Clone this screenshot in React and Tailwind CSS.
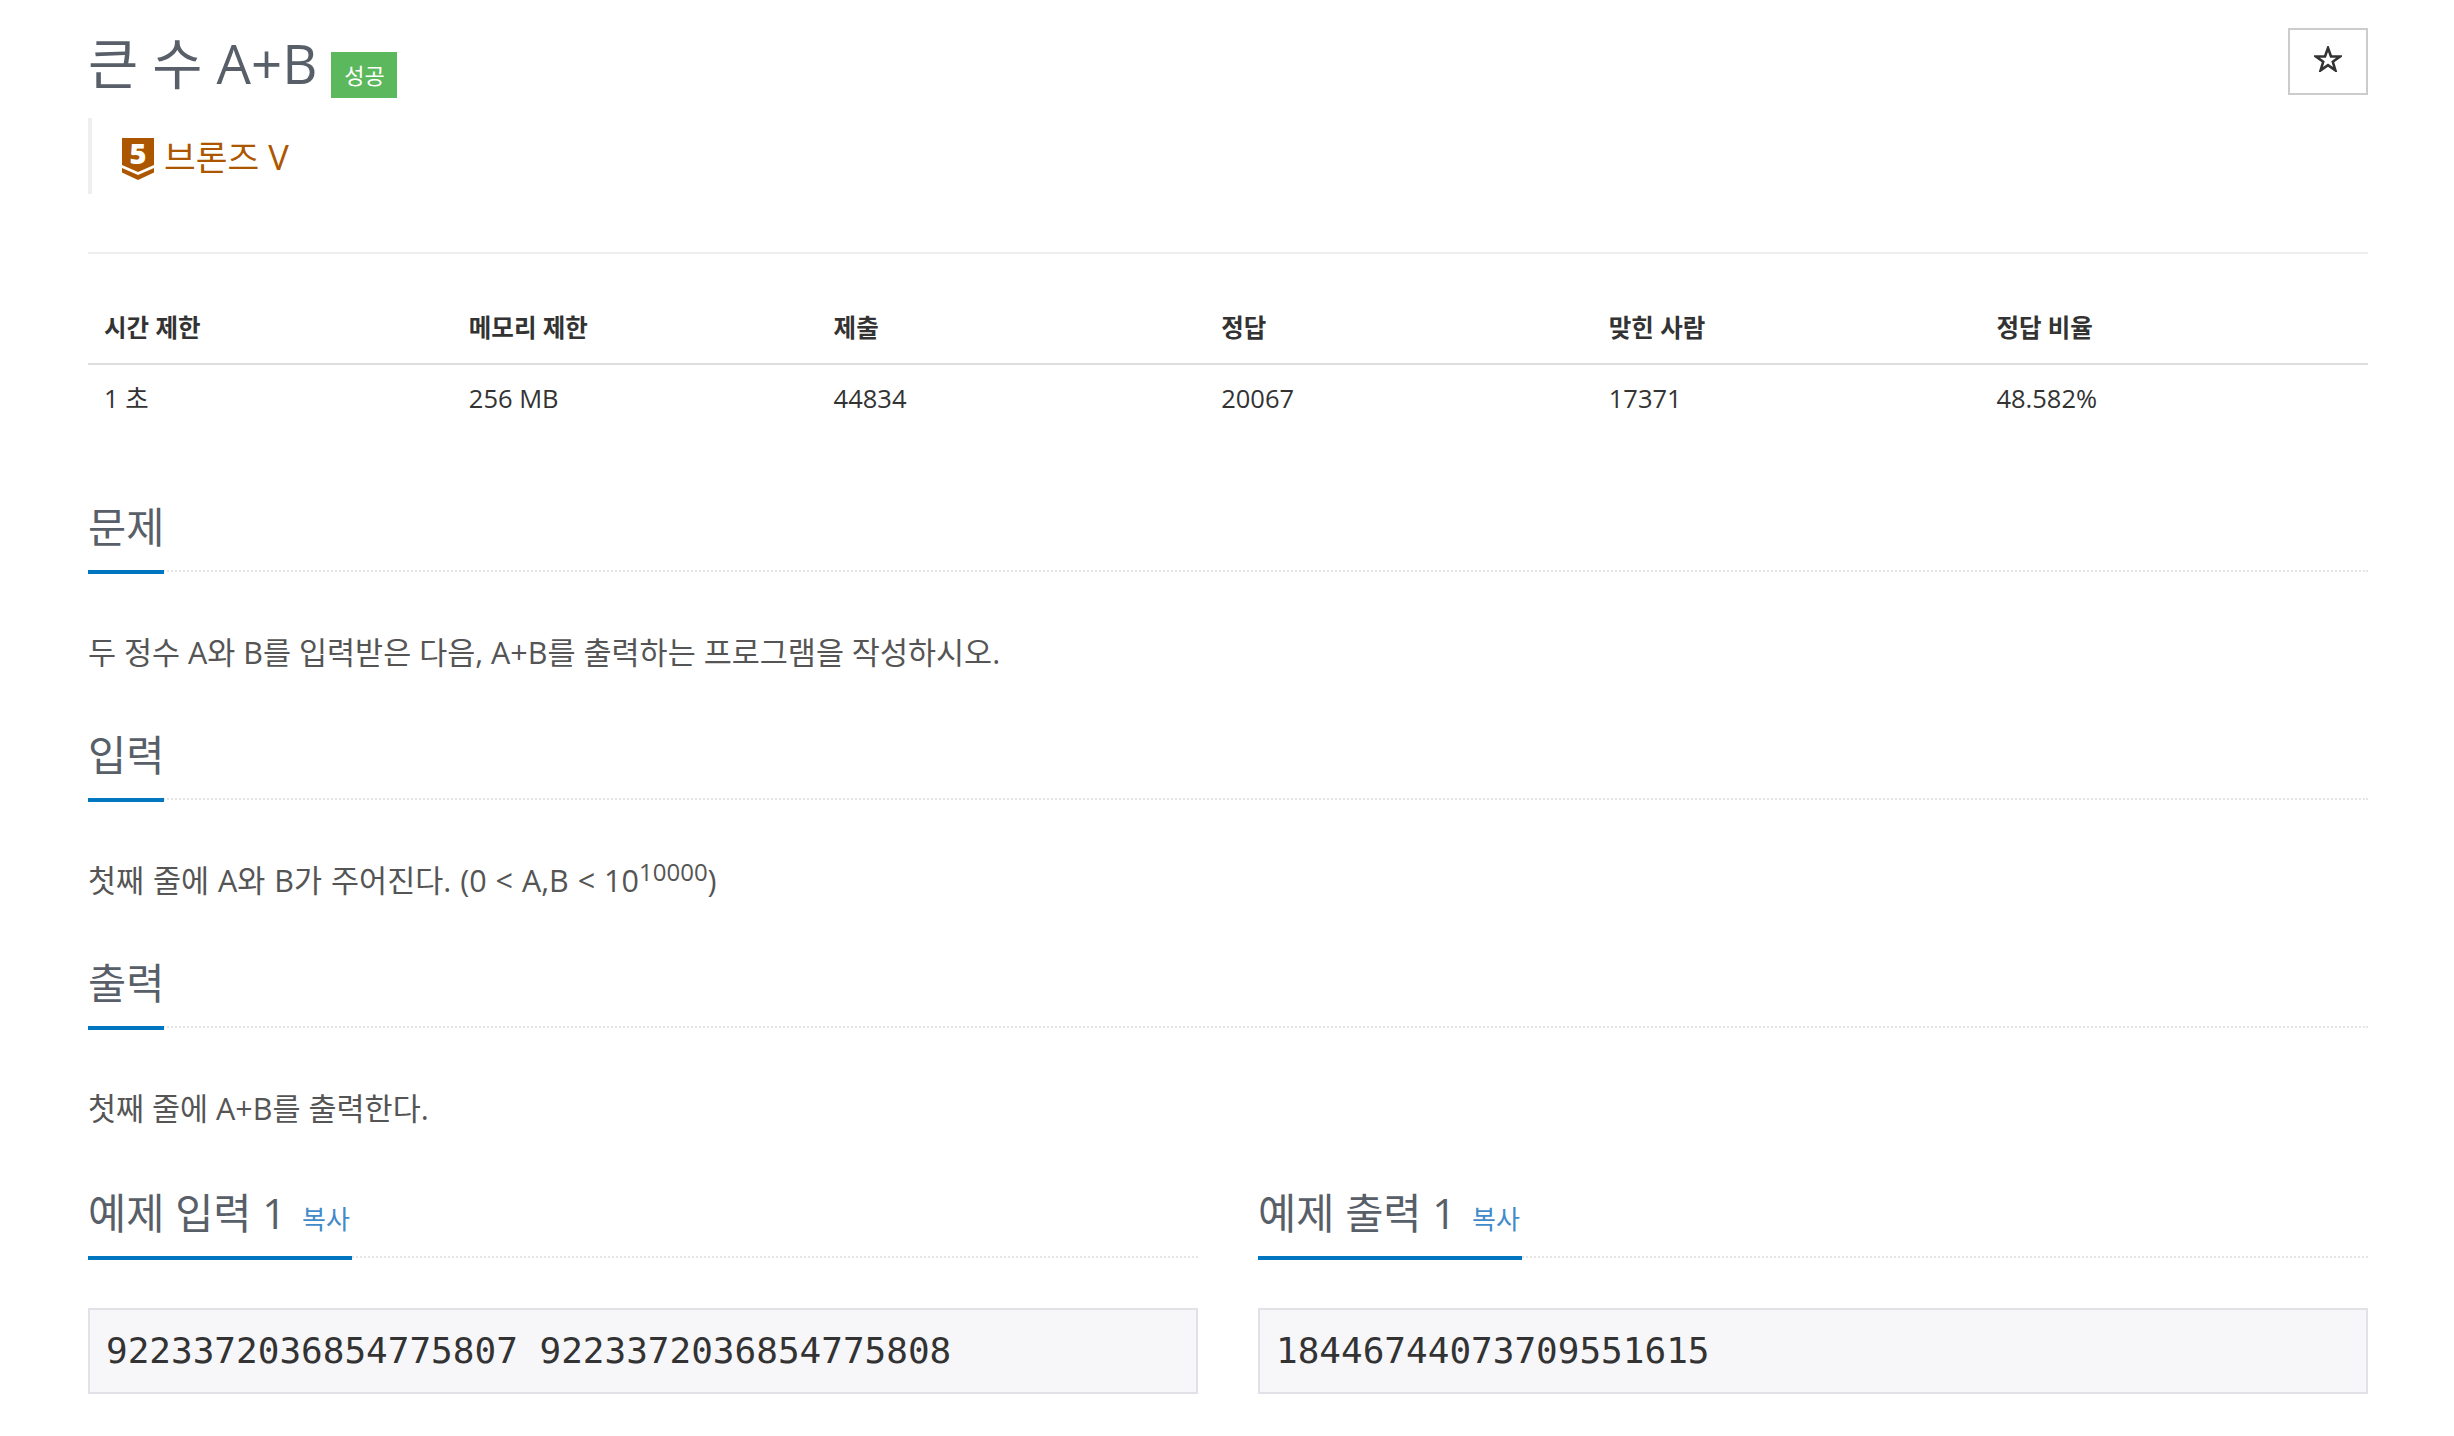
import React from 'react';

const STATS = [
  { label: '시간 제한', value: '1 초', width: 'w-[16%]' },
  { label: '메모리 제한', value: '256 MB', width: 'w-[16%]' },
  { label: '제출', value: '44834', width: 'w-[17%]' },
  { label: '정답', value: '20067', width: 'w-[17%]' },
  { label: '맞힌 사람', value: '17371', width: 'w-[17%]' },
  { label: '정답 비율', value: '48.582%', width: 'w-[17%]' },
];

function TierIcon() {
  return (
    <svg viewBox="0 0 32 42" className="w-[32px] h-[42px] shrink-0 overflow-visible">
      <path d="M0 0H32V27L16 34L0 27Z" fill="#ad5600" />
      <path d="M0 30L16 37L32 30V34.5L16 42L0 34.5Z" fill="#ad5600" />
      <text x="16" y="26" textAnchor="middle" fontSize="29" fontWeight="800" fill="#ffffff" fontFamily="'Open Sans', sans-serif">5</text>
    </svg>
  );
}

function StarIcon() {
  return (
    <svg viewBox="0 0 28 26" className="w-[28px] h-[26px] mb-[5px]">
      <path d="M14 2L17 10.5H26L18.8 15.8L21.4 24.4L14 19.2L6.6 24.4L9.2 15.8L2 10.5H11Z" fill="none" stroke="#333333" strokeWidth="2.6" strokeLinejoin="miter" />
    </svg>
  );
}

function Heading({ title, copy }) {
  return (
    <h2 className="flex items-start h-[85px] border-b-2 border-dotted border-[#e5e5e5] font-normal">
      <span className={`inline-block h-[87px] border-b-4 border-[#0076c0] text-[41.5px] leading-[80px] text-[#585f69] whitespace-nowrap ${copy ? 'pr-[2px]' : ''}`}>
        {title}
        {copy && <a className="ml-[16px] text-[26px] text-[#428bca]">복사</a>}
      </span>
    </h2>
  );
}

function Section({ title, children }) {
  return (
    <section className="mb-[43px]">
      <Heading title={title} />
      <p className="mt-[60px] text-[30.5px] leading-[40px] text-[#555555]">{children}</p>
    </section>
  );
}

function Sample({ title, text }) {
  return (
    <div>
      <Heading title={title} copy />
      <pre className="mt-[50px] h-[86px] border-2 border-[#e1e1e8] bg-[#f7f7f9] px-[16px] text-[36px] leading-[82px] text-[#333333] font-['DejaVu_Sans_Mono',monospace]">{text}</pre>
    </div>
  );
}

export default function App() {
  return (
    <div className="min-h-screen bg-white pl-[88px] pr-[86px] pb-[42px] font-['Open_Sans','Noto_Sans_CJK_KR',sans-serif]">
      <header className="h-[252px] border-b-2 border-[#eeeeee] box-content">
        <div className="flex justify-between items-start pt-[28px]">
          <div className="flex items-start">
            <h1 className="text-[54.5px] leading-[70px] text-[#585f69] font-normal">큰 수 A+B</h1>
            <span className="ml-[14px] mt-[24px] w-[66px] h-[46px] flex items-center justify-center bg-[#5cb85c] text-white text-[22px]">성공</span>
          </div>
          <button className="w-[80px] h-[67px] border-2 border-[#cccccc] bg-white flex items-center justify-center">
            <StarIcon />
          </button>
        </div>
        <div className="mt-[20px] h-[76px] border-l-4 border-[#eeeeee] pl-[30px] pt-[20px] flex items-start gap-[10px]">
          <TierIcon />
          <span className="text-[34.5px] leading-[38px] text-[#ad5600]">브론즈 V</span>
        </div>
      </header>

      <table className="mt-[38px] w-full table-fixed text-[#333333]">
        <thead>
          <tr className="h-[72px] border-b-2 border-[#dddddd]">
            {STATS.map((s) => (
              <th key={s.label} className={`${s.width} px-[16px] pt-[2px] text-left font-bold text-[24.5px]`}>{s.label}</th>
            ))}
          </tr>
        </thead>
        <tbody>
          <tr className="h-[67px]">
            {STATS.map((s) => (
              <td key={s.label} className="px-[16px] text-left text-[25.5px]">{s.value}</td>
            ))}
          </tr>
        </tbody>
      </table>

      <div className="mt-[56px]">
        <Section title="문제">두 정수 A와 B를 입력받은 다음, A+B를 출력하는 프로그램을 작성하시오.</Section>
        <Section title="입력">
          <span className="[word-spacing:1px]">
            첫째 줄에 A와 B가 주어진다. (0 &lt; A,B &lt; 10<sup className="text-[24px] leading-[0] -top-[11px]">10000</sup>)
          </span>
        </Section>
        <Section title="출력">첫째 줄에 A+B를 출력한다.</Section>
      </div>

      <div className="pt-[2px] grid grid-cols-2 gap-[60px]">
        <Sample title="예제 입력 1" text="9223372036854775807 9223372036854775808" />
        <Sample title="예제 출력 1" text="18446744073709551615" />
      </div>
    </div>
  );
}
